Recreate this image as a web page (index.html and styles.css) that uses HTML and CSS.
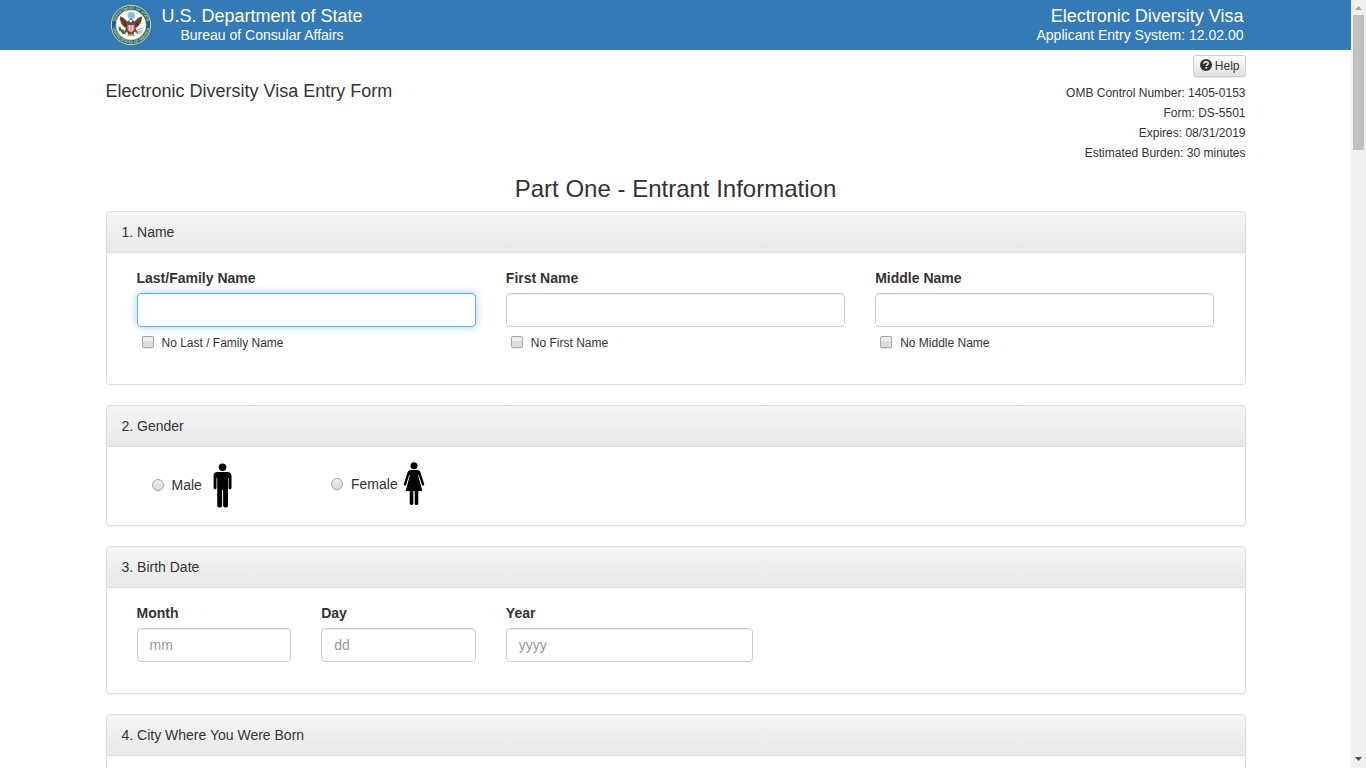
FILE: index.html
```html
<!DOCTYPE html>
<html lang="en">
<head>
<meta charset="utf-8">
<title>Electronic Diversity Visa Entry Form</title>
<link rel="stylesheet" href="styles.css">
</head>
<body>
<div class="viewport">
<div class="page">
  <header class="navbar">
    <div class="container navbar-inner">
      <svg class="seal" viewBox="0 0 42 42">
        <defs>
          <path id="arc-top" d="M5 21a16 16 0 0 1 32 0"/>
          <path id="arc-bottom" d="M2.500 21a18.500 18.500 0 0 0 37 0"/>
        </defs>
        <circle cx="21" cy="21" r="19.700" fill="#1c628f" stroke="#d9d98c" stroke-width="1"/>
        <text class="seal-text"><textPath href="#arc-top" startOffset="50%" text-anchor="middle">DEPARTMENT OF STATE</textPath></text>
        <text class="seal-text"><textPath href="#arc-bottom" startOffset="50%" text-anchor="middle">UNITED STATES OF AMERICA</textPath></text>
        <circle cx="21" cy="21" r="15" fill="#fdfdfa" stroke="#d3d28d" stroke-width=".7"/>
        <circle cx="21.300" cy="11.500" r="3.700" fill="#86bfe4" stroke="#b8d9e8" stroke-width=".7"/>
        <path d="M10 12.500c3 .3 5 2.500 7.300 5l2-1.500c0-1.800 2.500-1.800 3.200-.2l2 1.700c2.200-2.500 4.500-4.800 7.500-5-.2 5-2 9.500-6.500 11.500l3 6-4-2.500-1.500 4h-4.500l-1.500-4-3.500 2.500 2.500-6c-4.500-2-6.200-6.500-6-11.500z" fill="#754725"/>
        <path d="M11 14.500l5.500 6M13 20l4 2M31 14.500l-5.500 6M29 20l-4 2" stroke="#3e2a20" stroke-width="1"/>
        <path d="M19.200 15.700h3.300l-.8 2.500h-2z" fill="#f5f1e8"/>
        <path d="M17.600 19h6.800v5.500c0 2-1.500 3-3.400 3.900-1.900-.9-3.400-1.900-3.400-3.900z" fill="#f29a9c"/>
        <path d="M17.600 18.500h6.800v2.600h-6.800z" fill="#3d5390"/>
        <path d="M19.500 21v6M22.500 21v6" stroke="#fbdada" stroke-width=".7"/>
        <path d="M8.500 22.500l2.500 1 .5 2 2 .2 1 2 1.500.5-1 2.200-3-.8-1-2-2-.8z" fill="#36734b"/>
        <path d="M26 27l6-3M26 28.500l7-2M26.500 29.500l5.500-.7" stroke="#8b897c" stroke-width=".8"/>
        <path d="M18.500 30h5l1.500 2.500-4-.8-4 .8z" fill="#b29970"/>
      </svg>
      <div class="agency">
        <div class="brand-title">U.S. Department of State</div>
        <div class="brand-sub">Bureau of Consular Affairs</div>
      </div>
      <div class="system">
        <div class="brand-title">Electronic Diversity Visa</div>
        <div class="brand-sub">Applicant Entry System: 12.02.00</div>
      </div>
    </div>
  </header>

  <main class="container">
    <div class="intro">
      <h1 class="form-title">Electronic Diversity Visa Entry Form</h1>
      <div class="form-info">
        <button class="help-btn" type="button"><svg class="help-icon" viewBox="0 0 12 12"><circle cx="6" cy="6" r="6" fill="#333"/><path d="M4 4.700C4 3.200 4.900 2.700 6.100 2.700c1.200 0 2.100.6 2.100 1.700 0 1.500-1.800 1.400-1.800 2.700" fill="none" stroke="#f6f6f6" stroke-width="1.500"/><path d="M5.500 8h1.700v1.600H5.500z" fill="#f6f6f6"/></svg>Help</button>
        <div>OMB Control Number: 1405-0153</div>
        <div>Form: DS-5501</div>
        <div>Expires: 08/31/2019</div>
        <div>Estimated Burden: 30 minutes</div>
      </div>
    </div>

    <h2 class="part-title">Part One - Entrant Information</h2>

    <section class="panel">
      <div class="panel-heading">1. Name</div>
      <div class="panel-body name-body">
        <div class="field span-4">
          <label>Last/Family Name</label>
          <input class="control focused" type="text">
          <div class="check"><span class="box"></span>No Last / Family Name</div>
        </div>
        <div class="field span-4">
          <label>First Name</label>
          <input class="control" type="text">
          <div class="check"><span class="box"></span>No First Name</div>
        </div>
        <div class="field span-4 field-end">
          <label>Middle Name</label>
          <input class="control" type="text">
          <div class="check"><span class="box"></span>No Middle Name</div>
        </div>
      </div>
    </section>

    <section class="panel">
      <div class="panel-heading">2. Gender</div>
      <div class="panel-body gender-body">
        <div class="gender male"><span class="radio"></span>Male
          <svg class="man" viewBox="0 0 20 46"><g transform="translate(.5 .8)"><circle cx="10" cy="4.500" r="3.800"/><path d="M5 9.300h10c2.500 0 4 1.500 4 4V25c0 2-2.900 2-2.900 0V15h-.6v28c0 2.400-4.900 2.400-4.900 0V27h-1v16c0 2.400-4.900 2.400-4.900 0V15H4v10c0 2-2.900 2-2.900 0V13.300c0-2.500 1.400-4 3.900-4z"/></g></svg>
        </div>
        <div class="gender female"><span class="radio"></span>Female
          <svg class="woman" viewBox="0 0 22 46"><circle cx="11" cy="4.700" r="3.500"/><path d="M8 9h6c2 0 3 .8 3.600 2.700l3.500 11c.6 2-1.700 2.700-2.300.8L15.800 14h-.7l4.200 16h-4v12.500c0 2-3.600 2-3.600 0V30h-1.400v12.500c0 2-3.600 2-3.600 0V30h-4l4.200-16h-.7l-3 9.500c-.6 1.900-2.900 1.200-2.300-.8l3.500-11C5 9.800 6 9 8 9z"/></svg>
        </div>
      </div>
    </section>

    <section class="panel">
      <div class="panel-heading">3. Birth Date</div>
      <div class="panel-body birth-body">
        <div class="field span-2"><label>Month</label><input class="control" type="text" placeholder="mm"></div>
        <div class="field span-2"><label>Day</label><input class="control" type="text" placeholder="dd"></div>
        <div class="field span-3"><label>Year</label><input class="control" type="text" placeholder="yyyy"></div>
      </div>
    </section>

    <section class="panel">
      <div class="panel-heading">4. City Where You Were Born</div>
      <div class="panel-body name-body"></div>
    </section>
  </main>
</div>
<div class="scrollbar">
  <svg class="scroll-arrow" viewBox="0 0 15 14"><path d="M4 10h7L7.500 6z" fill="#a3a3a3"/></svg>
  <div class="thumb"></div>
  <svg class="scroll-arrow last" viewBox="0 0 15 14"><path d="M4 4h7L7.500 8z" fill="#505050"/></svg>
</div>
</div>
</body>
</html>
```
FILE: styles.css
```css
* { box-sizing: border-box; }
body {
  margin: 0;
  overflow: hidden;
  font: 14px/20px "Liberation Sans", Arial, sans-serif;
  color: #333;
  background: #fff;
}
.viewport { display: flex; height: 768px; overflow: hidden; }
.page { flex: 1; height: 768px; overflow: hidden; }
.container { width: 1140px; margin: 0 auto; }

.navbar { height: 50px; background: #337ab7; color: #fff; }
.navbar-inner { display: flex; padding: 4px 2px 0 4.500px; }
.seal { width: 42px; height: 42px; margin-right: 9.500px; }
.seal-text { font: bold 3.600px "Liberation Sans", sans-serif; fill: #d3d67c; }
.agency { text-align: center; padding-top: 2px; }
.system { margin-left: auto; text-align: right; padding-top: 2px; }
.brand-title { font-size: 18px; line-height: 20px; }
.brand-sub { font-size: 14px; line-height: 18px; }

.intro { display: flex; justify-content: space-between; height: 113px; }
.form-title { margin: 31px 0 0; font-size: 18px; font-weight: 400; line-height: 20px; }
.form-info { padding-top: 5px; font-size: 12px; text-align: right; }
.help-btn {
  display: flex;
  align-items: center;
  gap: 3px;
  height: 22px;
  margin: 0 0 6px auto;
  padding: 1px 5px 1px 6px;
  border: 1px solid #ccc;
  border-radius: 3px;
  background: linear-gradient(#fff, #e0e0e0);
  box-shadow: inset 0 1px 0 rgba(255,255,255,.15), 0 1px 1px rgba(0,0,0,.075);
  color: #333;
  font: 12px/18px "Liberation Sans", Arial, sans-serif;
}
.help-icon { width: 12px; height: 12px; margin-top: -2px; }
.part-title { margin: 13px 0 9px; font-size: 24px; font-weight: 400; line-height: 26px; text-align: center; }

.panel {
  margin-bottom: 20px;
  border: 1px solid #ddd;
  border-radius: 4px;
  box-shadow: 0 1px 2px rgba(0,0,0,.05);
}
.panel-heading {
  height: 41px;
  padding: 10px 15px;
  border-bottom: 1px solid #ddd;
  border-radius: 3px 3px 0 0;
  background: linear-gradient(#f5f5f5, #e8e8e8);
}
.panel-body { display: grid; grid-template-columns: repeat(12, 1fr); align-items: start; padding: 15px; }
.name-body { height: 131px; }
.birth-body { height: 105px; }
.span-2 { grid-column: span 2; }
.span-3 { grid-column: span 3; }
.span-4 { grid-column: span 4; }
.field { padding: 0 15px; }
.field-end { padding-right: 15.500px; }
.field label { display: block; margin-bottom: 5px; font-weight: 700; }
.control {
  display: block;
  width: 100%;
  height: 34px;
  padding: 6px 12px;
  border: 1px solid #ccc;
  border-radius: 4px;
  outline: 0;
  box-shadow: inset 0 1px 1px rgba(0,0,0,.075);
  font: 14px/20px "Liberation Sans", Arial, sans-serif;
}
.control::placeholder { color: #999; opacity: 1; }
.control.focused {
  border-color: #66afe9;
  box-shadow: inset 0 1px 1px rgba(0,0,0,.075), 0 0 8px rgba(102,175,233,.6);
}
.check { display: flex; align-items: center; gap: 8px; margin-top: 6px; padding-left: 5px; font-size: 12px; }
.box {
  width: 12px;
  height: 12px;
  margin-top: -2px;
  border: 1px solid #a6a6a6;
  border-radius: 2px;
  background: linear-gradient(#ededed 38%, #dcdcdc 38%, #dedede);
  box-shadow: 0 1px 1px rgba(0,0,0,.08);
}
.gender-body { display: flex; height: 78px; padding: 15px 45px; }
.gender { display: flex; align-items: center; }
.male { width: 179.500px; height: 46px; }
.female { height: 44px; }
.radio {
  width: 12px;
  height: 12px;
  margin-right: 8px;
  border: 1px solid #a9a9a9;
  border-radius: 50%;
  background: linear-gradient(#eee, #dcdcdc);
  box-shadow: 0 1px 1px rgba(0,0,0,.08);
}
.man { width: 20px; height: 46px; margin-left: 10.500px; }
.woman { width: 22px; height: 46px; margin-left: 5px; }

.scrollbar { display: flex; flex-direction: column; width: 15px; background: #f1f1f1; }
.scroll-arrow { width: 15px; height: 14px; margin-bottom: 1px; }
.thumb { width: 11px; height: 135px; margin: 0 2px; background: #c1c1c1; }
.last { margin: auto 0 1px; }
```
